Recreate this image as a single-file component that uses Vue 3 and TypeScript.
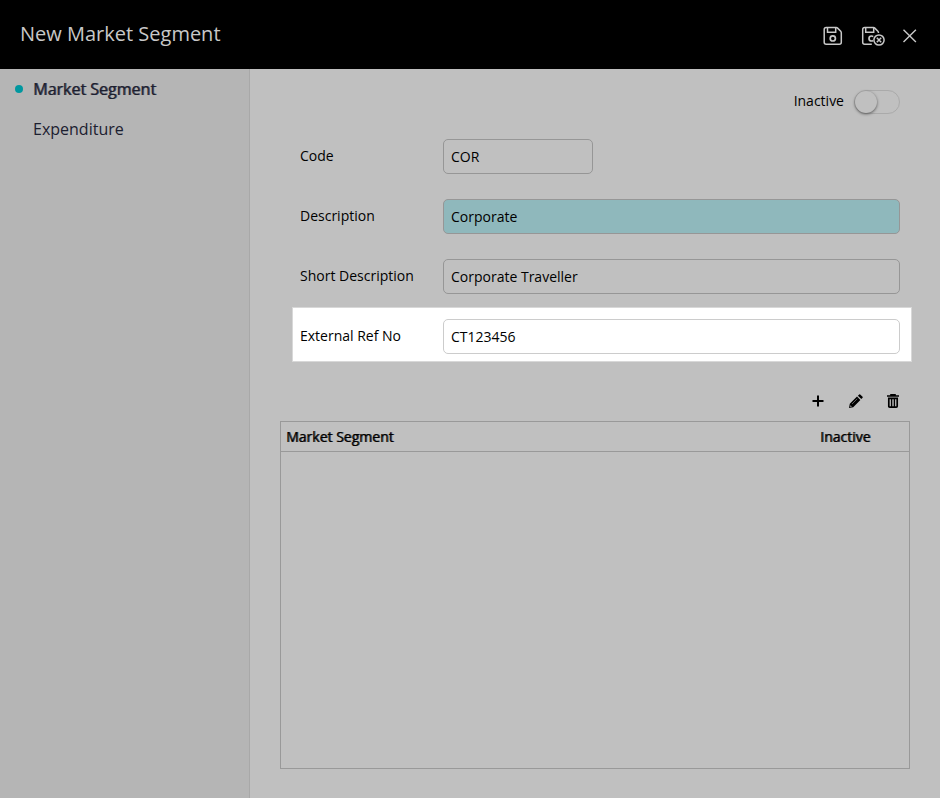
<script setup lang="ts">
import { ref } from 'vue'

interface Field {
  id: string
  label: string
  value: string
  state?: 'short' | 'required' | 'highlight'
}

interface Segment {
  name: string
  inactive: boolean
}

const tabs = ['Market Segment', 'Expenditure']
const activeTab = ref(tabs[0])
const inactive = ref(false)
const segments = ref<Segment[]>([])
const fields = ref<Field[]>([
  { id: 'code', label: 'Code', value: 'COR', state: 'short' },
  { id: 'description', label: 'Description', value: 'Corporate', state: 'required' },
  { id: 'short-description', label: 'Short Description', value: 'Corporate Traveller' },
  { id: 'external-ref', label: 'External Ref No', value: 'CT123456', state: 'highlight' },
])
</script>

<template>
  <div class="dialog">
    <header class="header">
      <h1 class="title">New Market Segment</h1>
      <div class="header-actions">
        <button type="button" class="icon-button" aria-label="Save">
          <svg width="20" height="20" viewBox="0 0 20 20" fill="none" stroke="currentColor" stroke-width="1.5">
            <path d="M3.2 1.5H13.2Q14 1.5 14.6 2.1L17.7 5.3Q18.3 5.9 18.3 6.7V16.3Q18.3 18.3 16.3 18.3H3.2Q1.2 18.3 1.2 16.3V3.5Q1.2 1.5 3.2 1.5Z" />
            <path d="M4.5 1.5V6.3H12.7V1.5" />
            <circle cx="9.8" cy="12.4" r="2.6" stroke-width="1.7" />
          </svg>
        </button>
        <button type="button" class="icon-button" aria-label="Save and close">
          <svg width="24" height="20" viewBox="0 0 24 20" fill="none" stroke="currentColor" stroke-width="1.5">
            <path d="M10.8 18.3H3.7Q1.7 18.3 1.7 16.3V3.5Q1.7 1.5 3.7 1.5H12.4Q13.2 1.5 13.8 2.1L16.9 5.3Q17.5 5.9 17.5 6.9" />
            <path d="M4.7 1.5V6.3H12.7V1.5" />
            <path d="M12.2 10.6Q11.5 10 10.5 10Q8 10 8 12.5Q8 15 10.5 15Q11.4 15 12 14.5" stroke-width="1.7" />
            <circle cx="18" cy="14" r="5.1" />
            <path d="M15.8 11.8L20.2 16.2M20.2 11.8L15.8 16.2" />
          </svg>
        </button>
        <button type="button" class="icon-button" aria-label="Close">
          <svg width="14" height="14" viewBox="0 0 14 14" fill="none" stroke="currentColor" stroke-width="1.4">
            <path d="M0.5 0.7L12.9 13.1M12.9 0.7L0.5 13.1" />
          </svg>
        </button>
      </div>
    </header>

    <div class="body">
      <nav class="sidebar">
        <a
          v-for="tab in tabs"
          :key="tab"
          href="#"
          class="tab"
          :class="{ active: tab === activeTab }"
          @click.prevent="activeTab = tab"
        >{{ tab }}</a>
      </nav>

      <main class="content">
        <form class="form" @submit.prevent>
          <label class="toggle">
            <span>Inactive</span>
            <input v-model="inactive" type="checkbox" class="switch" />
          </label>
          <div v-for="field in fields" :key="field.id" class="row" :class="field.state">
            <label class="label" :for="field.id">{{ field.label }}</label>
            <input :id="field.id" v-model="field.value" type="text" class="input" />
          </div>
        </form>

        <div class="toolbar">
          <button type="button" class="icon-button" aria-label="Add">
            <svg width="12" height="12" viewBox="0 0 12 12" fill="none" stroke="currentColor" stroke-width="2">
              <path d="M6 0.5V11.5M0.5 6H11.5" />
            </svg>
          </button>
          <button type="button" class="icon-button" aria-label="Edit">
            <svg width="15" height="14" viewBox="0 0 15 14" fill="currentColor">
              <path d="M1 14L1.8 9.8L9 2.6L12.4 6L5.2 13.2ZM9.9 1.7L11.2 0.4Q11.7 0 12.2 0.4L14.6 2.8Q15 3.3 14.6 3.8L13.3 5.1Z" />
              <path d="M4 10L9.2 4.8" fill="none" stroke="#c0c0c0" stroke-width="0.5" />
              <path d="M2.4 11.2L3.8 12.6L2.4 13Z" fill="#c0c0c0" />
            </svg>
          </button>
          <button type="button" class="icon-button" aria-label="Delete">
            <svg width="12" height="14" viewBox="0 0 12 14" fill="none" stroke="currentColor">
              <path d="M0 2H12M4 1.5V0.7H8V1.5" stroke-width="1.6" />
              <path d="M1.8 4.3H10.2V12.2Q10.2 13.1 9.3 13.1H2.7Q1.8 13.1 1.8 12.2Z" stroke-width="1.7" />
              <path d="M4.6 4V13M7.4 4V13" stroke-width="1.4" />
            </svg>
          </button>
        </div>

        <div class="grid">
          <table class="table">
            <thead>
              <tr>
                <th scope="col">Market Segment</th>
                <th scope="col" class="status">Inactive</th>
              </tr>
            </thead>
            <tbody>
              <tr v-for="segment in segments" :key="segment.name">
                <td>{{ segment.name }}</td>
                <td class="status">{{ segment.inactive ? 'Yes' : 'No' }}</td>
              </tr>
            </tbody>
          </table>
        </div>
      </main>
    </div>
  </div>
</template>

<style>
body {
  background: #c0c0c0;
}
</style>

<style scoped>
.dialog {
  display: flex;
  flex-direction: column;
  min-height: 100vh;
  color: #000;
  font: 14px/20px 'Open Sans', 'Noto Sans', sans-serif;
}

.header {
  display: flex;
  align-items: center;
  justify-content: space-between;
  box-sizing: border-box;
  height: 69px;
  padding: 0 23px 0 20px;
  background: #000;
  color: #c8c8c8;
}

.title {
  margin: 0;
  padding-bottom: 2px;
  font-size: 20px;
  font-weight: 400;
  line-height: 28px;
}

.header-actions {
  display: flex;
  align-items: center;
  gap: 18px;
  padding-top: 2px;
}

.icon-button {
  display: flex;
  padding: 0;
  border: 0;
  background: none;
  color: inherit;
  cursor: pointer;
}

.body {
  display: flex;
  flex: 1;
}

.sidebar {
  box-sizing: border-box;
  flex: 0 0 250px;
  border-right: 1px solid #a8a8a8;
  background: #b5b5b5;
}

.tab {
  display: flex;
  align-items: center;
  height: 40px;
  color: #1c2030;
  font-size: 16px;
  text-decoration: none;
}

.tab::before {
  width: 8px;
  height: 8px;
  margin: 0 10px 0 15px;
  border-radius: 50%;
  content: '';
}

.tab.active {
  text-shadow: 1px 0 rgb(28 32 48 / 70%);
}

.tab.active::before {
  background: #00979f;
}

.content {
  display: flex;
  flex: 1;
  flex-direction: column;
  min-width: 0;
  padding: 20px 30px 29px;
}

.form {
  display: flex;
  flex-direction: column;
  padding: 0 10px 0 12px;
}

.toggle {
  display: flex;
  gap: 10px;
  align-self: flex-end;
  margin-bottom: 13px;
  line-height: 24px;
}

.switch {
  box-sizing: border-box;
  width: 46px;
  height: 24px;
  margin: 1px 0 0;
  border: 1px solid #aaa;
  border-radius: 12px;
  appearance: none;
}

.switch::before {
  display: block;
  width: 22px;
  height: 22px;
  border-radius: 50%;
  background: #c0c0c0;
  box-shadow: 0 1px 3px #555;
  content: '';
}

.switch:checked::before {
  margin-left: 22px;
}

.row {
  display: flex;
  align-items: flex-start;
  box-sizing: border-box;
  height: 60px;
  padding: 12px 0 0 8px;
}

.label {
  flex: 0 0 143px;
  padding-top: 7px;
}

.input {
  box-sizing: border-box;
  flex: 1;
  min-width: 0;
  height: 35px;
  padding: 0 7px;
  border: 1px solid #969696;
  border-radius: 5px;
  background: transparent;
  color: #000;
  font: inherit;
}

.short .input {
  flex: 0 0 150px;
}

.required .input {
  background: #8fb8bc;
}

.highlight {
  height: 55px;
  margin-right: -12px;
  padding: 11px 11px 0 7px;
  border: 1px solid #d8d8d8;
  background: #fff;
}

.highlight .input {
  border-color: #ccc;
}

.toolbar {
  display: flex;
  align-items: center;
  justify-content: flex-end;
  gap: 24px;
  height: 20px;
  margin: 29px 11px 10px 0;
}

.grid {
  flex: 1;
  border: 1px solid #999;
}

.table {
  width: 100%;
  border-collapse: collapse;
}

.table th,
.table td {
  height: 29px;
  padding: 0 5px;
  border-bottom: 1px solid #999;
  text-align: left;
}

.table th {
  font-weight: 400;
  text-shadow: 1px 0 rgb(0 0 0 / 70%);
}

.table .status {
  width: 84px;
}
</style>
